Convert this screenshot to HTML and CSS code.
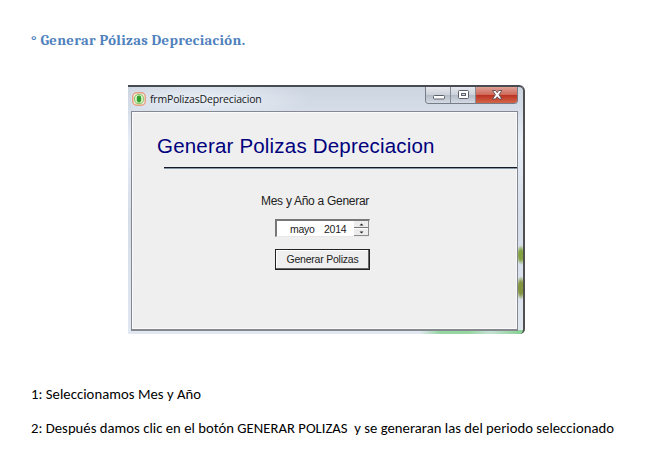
FILE: index.html
```html
<!DOCTYPE html>
<html lang="es">
<head>
<meta charset="utf-8">
<title>Generar Pólizas Depreciación</title>
<link rel="stylesheet" href="styles.css">
</head>
<body>
<main class="page">
  <h1 class="heading"><span>° Generar Pólizas Depreciación.</span></h1>
  <section class="window">
    <header class="titlebar">
      <svg class="app-icon" width="14" height="14" viewBox="0 0 14 14">
        <rect x=".7" y=".7" width="12.6" height="12.6" rx="4" fill="#f5e9d5" stroke="#e6a184" stroke-width="1.4"/>
        <circle cx="7" cy="7" r="4.6" fill="#e5f3cf" stroke="#8fcc72" stroke-width="1.2"/>
        <ellipse cx="7" cy="7" rx="2.3" ry="3.4" fill="#2f9e2c"/>
      </svg>
      <span class="caption">frmPolizasDepreciacion</span>
      <div class="controls">
        <span class="control"><svg width="25" height="17" viewBox="0 0 25 17"><rect x="7.500" y="8.500" width="11" height="3.500" rx="1" fill="#fff" stroke="#5c616c"/></svg></span>
        <span class="control"><svg width="24" height="17" viewBox="0 0 24 17"><rect x="7.500" y="3.500" width="10" height="8" rx="1" fill="#fff" stroke="#5c616c"/><rect x="10.500" y="6.500" width="4" height="2" fill="#d9dde4" stroke="#5c616c"/></svg></span>
        <span class="control close"><svg width="42" height="17" viewBox="0 0 42 17"><path d="M16.500 3.500h3l1.700 2.200 1.700-2.200h3l-2.900 4.200 2.900 4.300h-3l-1.700-2.200-1.700 2.200h-3l2.900-4.300z" fill="#fff" stroke="#5c4a52" stroke-width=".9"/></svg></span>
      </div>
    </header>
    <div class="client">
      <h2 class="form-title"><span>Generar Polizas Depreciacion</span></h2>
      <div class="rule"></div>
      <div class="form">
        <label class="label">Mes y Año a Generar</label>
        <div class="picker">
          <span class="month">mayo</span><span class="year">2014</span>
          <span class="spinner"><svg width="15" height="15" viewBox="0 0 15 15"><path d="M0 6.500h15" stroke="#777"/><path d="M0 7.500h15" stroke="#fff"/><path d="M0 14.500h15M14.500 0v15" stroke="#8b8b8b"/><path d="M7.500 2.500l2 2h-4zM7.500 12.500l2-2h-4z" fill="#222"/></svg></span>
        </div>
        <button class="generate" type="button">Generar Polizas</button>
      </div>
    </div>
  </section>
  <ol class="steps">
    <li class="step step-one">1: Seleccionamos Mes y Año</li>
    <li class="step step-two">2: Después damos clic en el botón GENERAR POLIZAS&nbsp; y se generaran las del periodo seleccionado</li>
  </ol>
</main>
</body>
</html>
```
FILE: styles.css
```css
* { box-sizing: border-box; }
body { margin: 0; background: #fff; }
.page { width: 667px; height: 465px; padding: 31px 0 0 31px; overflow: hidden; display: flex; flex-direction: column; white-space: nowrap; }
.heading { margin: 0; height: 54px; color: #4f81bd; font: bold 14.67px/20px Caladea, Cambria, "Noto Serif", "DejaVu Serif", serif; letter-spacing: 0.33px; }
.window { margin-left: 97px; width: 397px; height: 249px; padding: 0 5px 3px 3px; display: flex; flex-direction: column; border-top: 2px solid #484b50; border-right: 2px solid #505050; border-top-right-radius: 6px; border-bottom-right-radius: 5px;
  background:
    radial-gradient(ellipse 5px 10px at 393px 168px, #83a341 45%, transparent),
    radial-gradient(ellipse 5px 12px at 393px 201px, #83963f 50%, transparent),
    linear-gradient(90deg, transparent 292px, #96d6a2 312px, #96d6a2 340px, #c5e2d4 362px, #8ad295 392px) 0 243px / 100% 4px no-repeat,
    linear-gradient(#cdd5e1, #d4dce8 20px, #e9eff7 55px, #d5dde9 130px, #e1e8f1); }
.titlebar { height: 24px; flex: none; display: flex; align-items: flex-start; padding-left: 1px; background: radial-gradient(ellipse 105px 20px at 75px 12px, #eaeff5, transparent); }
.app-icon { margin-top: 5px; }
.caption { margin-left: 4px; font: 10.5px/24px "Open Sans", "Noto Sans", sans-serif; color: #16181c; letter-spacing: -0.17px; }
.controls { margin-left: auto; display: flex; height: 17px; width: 93px; border: 1px solid #777d88; border-top: 0; border-radius: 0 0 4px 4px; overflow: hidden; }
.control { width: 25px; height: 17px; border-right: 1px solid #858b95; background: linear-gradient(#e5e8ed, #cdd2da 45%, #b6bdc8 50%, #d8dee7); }
.control svg { display: block; }
.control.close { width: 42px; border: 0; background: linear-gradient(#dda097, #d06b5a 44%, #bd3323 50%, #d46d4e); }
.client { flex: 1; background: #efefef; border: 1px solid #858890; border-bottom: 2px solid #85898d; padding: 21px 0 0; box-shadow: inset 0 0 0 1px #fafafa; display: flex; flex-direction: column; }
.form-title { margin: 0 0 0 25px; height: 34px; font: 20.5px/26px "Liberation Sans", Arial, sans-serif; color: #00007d; letter-spacing: 0.19px; }
.rule { height: 2px; flex: none; margin-left: 32px; background: #141a26; border-bottom: 1px solid #8495a4; }
.form { display: flex; flex-direction: column; align-items: flex-start; margin: 23px 0 0 129px; font-family: "Liberation Sans", Arial, sans-serif; color: #222; }
.label { font-size: 12px; line-height: 18px; letter-spacing: -0.28px; }
.picker { margin: 9px 0 0 14px; width: 95px; height: 18px; display: flex; border-top: 2px solid #777; border-left: 2px solid #777; border-right: 1px solid #eee; border-bottom: 1px solid #e8e8e8; background: #fff; font-size: 10.5px; line-height: 17px; letter-spacing: -0.25px; }
.month { width: 35px; padding-left: 13px; }
.year { width: 42px; padding-left: 12px; }
.spinner { width: 15px; height: 15px; background: #ececec; }
.spinner svg { display: block; }
.generate { margin: 12px 0 0 14px; width: 95px; height: 21px; padding: 0; border: 1px solid #222; background: #efefef; box-shadow: inset -1px -1px #666, inset 1px 1px #fff; font: 10.5px/17px "Liberation Sans", Arial, sans-serif; letter-spacing: -0.22px; color: #222; }
.steps { list-style: none; margin: 50px 0 0; padding: 0; font: 14.67px/20px Carlito, Lato, sans-serif; color: #000; }
.step { height: 34px; }
.step-one { letter-spacing: 0.05px; }
.step-two { letter-spacing: 0.03px; }
```
